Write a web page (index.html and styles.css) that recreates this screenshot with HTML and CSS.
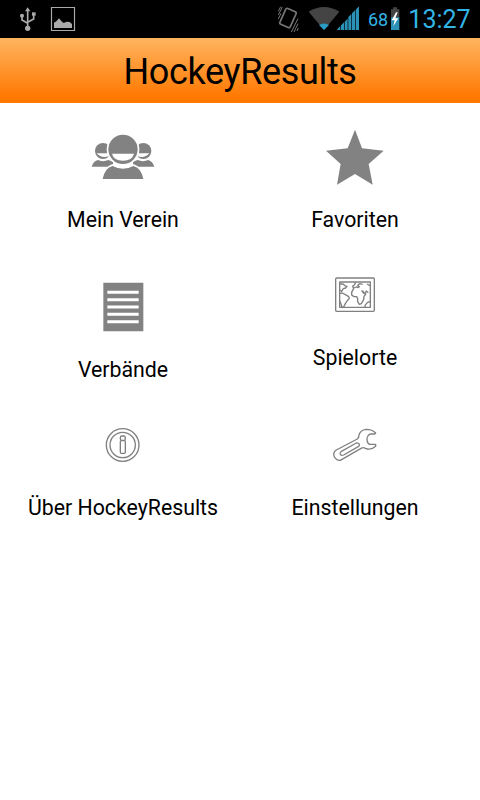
FILE: index.html
```html
<!DOCTYPE html>
<html lang="de">
<head>
    <meta charset="UTF-8">
    <meta name="viewport" content="width=device-width, initial-scale=1.0">
    <title>HockeyResults</title>
    <link rel="stylesheet" href="styles.css">
</head>
<body>
    <div class="statusbar">
        <svg class="notifications" width="90" height="38" viewBox="0 0 270 114">
            <!-- usb -->
            <g fill="none" stroke="#aaa" stroke-width="5">
                <path d="M83 30V82M66 50v10l17 10M101 44v13l-18 10"/>
            </g>
            <g fill="#aaa">
                <path d="M83 22l8 12H75z"/>
                <circle cx="83" cy="85" r="8"/>
                <circle cx="66" cy="47" r="6"/>
                <path d="M96 37h11v10H96z"/>
            </g>
            <!-- picture -->
            <path d="M154.500 22.500h69v69h-69z" fill="none" stroke="#aaa" stroke-width="3.500"/>
            <path d="M162 84V68l7-4 8-9 9 10 5 4 9-4 9 1 7 6v12z" fill="#aaa"/>
        </svg>
        <svg class="signals" width="90" height="38" viewBox="45 0 270 114">
            <!-- vibrate -->
            <g fill="none" stroke="#777">
                <rect x="67" y="28" width="34" height="52" rx="5" stroke-width="5" transform="rotate(24 84 54)"/>
                <path d="M55 45l12-24M55 34l7-14M55 57l8-17M94 96l20-40M102 96l12-25M111 93l4-9" stroke-width="3"/>
            </g>
            <!-- wifi -->
            <path d="M192 90L146 35Q192 7 238 35z" fill="#444"/>
            <path d="M192 90l-15-15q15-9 30 0z" fill="#2a9cc4"/>
            <!-- mobile signal -->
            <g fill="#2b91b6">
                <path d="M232 90v-3l9-9v12zM243 90V76l9-9v23zM254 90V65l9-9v34zM265 90V51l9-9v48zM276 90V40l9-9v59zM287 90V29l10-10v71z"/>
            </g>
        </svg>
        <span class="percent">68</span>
        <svg class="battery" width="10" height="38" viewBox="390 0 30 114">
            <path d="M393 28h6v-6h12v6h7v27h-25z" fill="#444"/>
            <path d="M393 52h25v38h-25z" fill="#2b91b6"/>
            <path d="M408 37l-13 24h9l-4 18 15-24h-9l7-18z" fill="#fff"/>
        </svg>
        <span class="clock">13:27</span>
    </div>

    <h1 class="header">HockeyResults</h1>

    <div class="menu">
        <a class="item">
            <svg class="icon" viewBox="21 3 216 216">
                <g fill="#828282">
                    <circle cx="69" cy="93" r="24"/>
                    <circle cx="190" cy="93" r="24"/>
                    <path d="M35 140q5-16 18-20 16 7 32 0l14 5v15zM223 140q-5-16-18-20-16 7-32 0l-14 5v15z"/>
                </g>
                <path d="M50 100h38v7q-21 11-38-7zM208 100h-38v7q21 11 38-7z" fill="#fff"/>
                <circle cx="129" cy="88" r="49" fill="#fff"/>
                <path d="M64 181q6-40 32-48h66q26 8 32 48z" fill="#fff"/>
                <path d="M68 177q6-33 30-39 31 17 62 0 24 6 30 39z" fill="#828282"/>
                <circle cx="129" cy="88" r="44" fill="#828282"/>
                <path d="M96 101h66q-5 21-33 21t-33-21z" fill="#fff"/>
            </svg>
            <span class="label">Mein Verein</span>
        </a>
        <a class="item">
            <svg class="icon" viewBox="27 3 216 216">
                <path d="M135 29l21 56 65 7-45 40 12 62-53-32-54 32 11-62-44-40 65-7z" fill="#828282"/>
            </svg>
            <span class="label">Favoriten</span>
        </a>
        <a class="item">
            <svg class="icon" viewBox="-9 3 216 216">
                <path d="M40 38h120v146H40z" fill="#828282"/>
                <path d="M52 66.500h94M52 89h94M52 111h94M52 133h94M52 155h94" stroke="#fff" stroke-width="9"/>
            </svg>
            <span class="label">Verbände</span>
        </a>
        <a class="item small">
            <svg class="icon" viewBox="-18 -18 216 216">
                <g class="outline">
                    <rect x="32" y="39" width="116" height="100" rx="3"/>
                    <path d="M44 51h92v76H44z"/>
                    <path d="M45 57h9l7 6 5 1-4 5-7 2-5 8-5-4M45 85l7-1 9 5 10 6 2 5-7 8-5 8-5 10-5 1-3-10-4-10"/>
                    <path d="M92 52l-4 8-5 4 3 6-6 12v8l7 5h8l3 6v9l5 8 6-2 7-12 1-10 5-6-7-4-5-8M86 69l8-3 9 2M104 66l-6-5 6-5 9 2M113 78l7 9 4-9 6 5M126 57l9 5M116 98v6M135 109l-8 4-7 8 1 6"/>
                </g>
            </svg>
            <span class="label">Spielorte</span>
        </a>
        <a class="item small">
            <svg class="icon" viewBox="-24 -18 216 216">
                <g class="outline">
                    <circle cx="83" cy="90" r="49"/>
                    <circle cx="83" cy="90" r="38"/>
                    <rect x="76" y="63" width="15" height="13" rx="5"/>
                    <rect x="76" y="77" width="15" height="38" rx="3"/>
                </g>
            </svg>
            <span class="label">Über HockeyResults</span>
        </a>
        <a class="item small">
            <svg class="icon" viewBox="-18 -18 216 216">
                <g class="outline">
                    <path d="M152 54q-10-11-29-11-17 2-21 17 0 8-5 12L34 105q-10 6-7 18 6 14 19 13l62-36q7-4 13 0 17 7 31-6v-6h-18q-7-2-8-14 0-12 9-17h14z"/>
                    <path d="M48 110l46-26q6-2 9 4 1 4-2 6l-45 26q-7 3-10-2-2-5 2-8z"/>
                </g>
            </svg>
            <span class="label">Einstellungen</span>
        </a>
    </div>
</body>
</html>
```

FILE: styles.css
```css
body {
    margin: 0;
    font-family: Roboto, sans-serif;
    background-color: #fff;
    color: #000;
}
.statusbar {
    display: flex;
    align-items: center;
    height: 38px;
    background-color: #000;
    color: #33b5e5;
}
.signals {
    margin-left: auto;
}
.percent {
    width: 22px;
    margin-left: 3px;
    font-size: 18px;
    line-height: 38px;
    padding-top: 1px;
}
.clock {
    width: 71px;
    text-align: center;
    font-size: 25px;
    line-height: 38px;
    white-space: nowrap;
    padding: 2px 5px 0 4px;
}
.header {
    margin: 0;
    height: 65px;
    line-height: 69px;
    text-align: center;
    font-size: 36px;
    font-weight: normal;
    letter-spacing: -0.35px;
    background: linear-gradient(#ffb460, #ff7800 92%);
}
.menu {
    display: grid;
    grid-template-columns: 232px 232px;
    grid-auto-rows: 150px;
    padding-left: 7px;
}
.item {
    display: flex;
    flex-direction: column;
    align-items: center;
    padding-top: 18px;
}
.small {
    padding-top: 6px;
}
.icon {
    width: 72px;
    height: 72px;
}
.label {
    margin-top: 13px;
    font-size: 21.3px;
    line-height: 28px;
    white-space: nowrap;
}
.outline {
    fill: none;
    stroke: #808080;
    stroke-width: 4;
    stroke-linejoin: round;
}
```
